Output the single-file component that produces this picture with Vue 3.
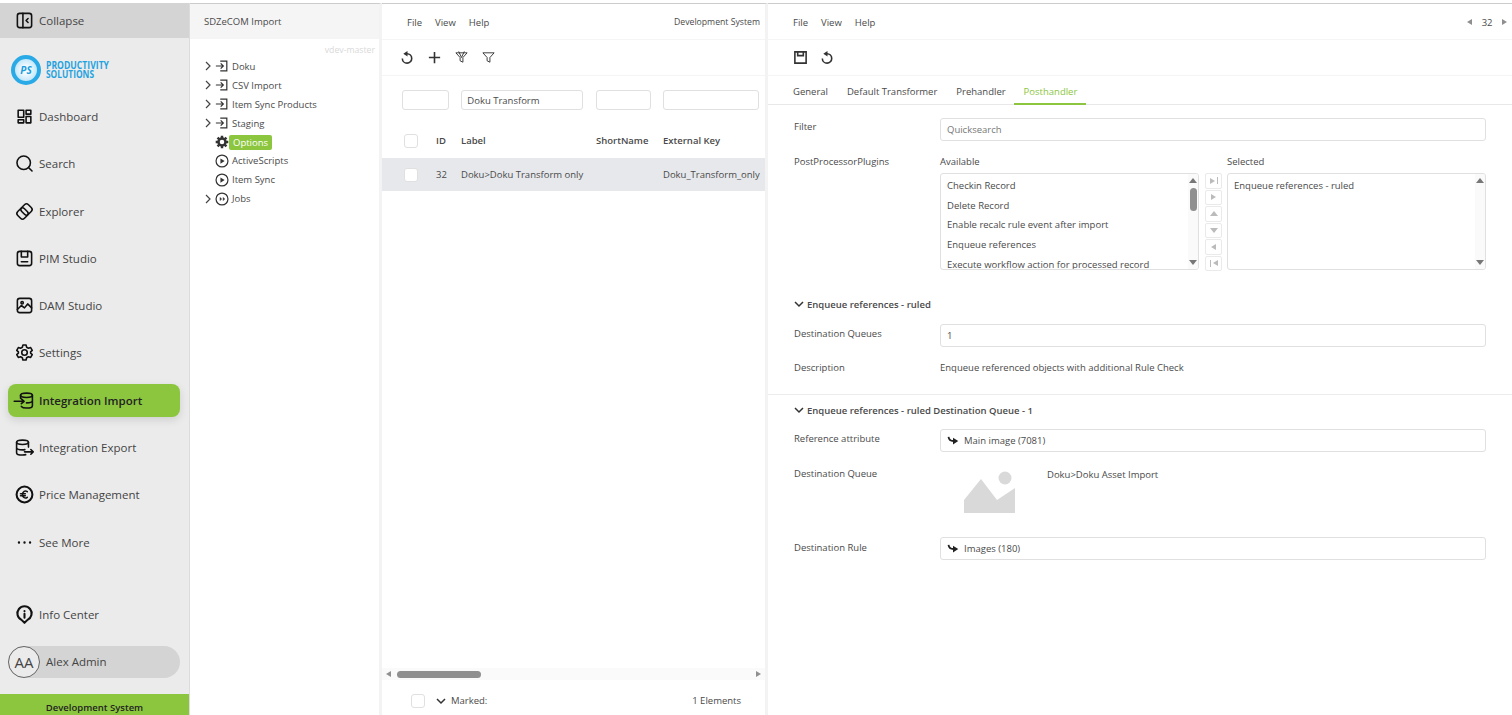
<template>
  <div class="app">
    <aside class="sidebar">
      <div class="collapse">
        <svg class="nav-icon" viewBox="0 0 24 24"><rect x="3" y="3" width="18" height="18" rx="3" /><path d="M10 3v18M16.500 9.500 14 12l2.500 2.500" /></svg>
        <span>Collapse</span>
      </div>
      <div class="logo">
        <div class="logo-mark"><span>PS</span></div>
        <svg class="logo-text" viewBox="0 0 64 18">
          <text x="0" y="8" textLength="63" lengthAdjust="spacingAndGlyphs">PRODUCTIVITY</text>
          <text x="0" y="16.500" textLength="48" lengthAdjust="spacingAndGlyphs">SOLUTIONS</text>
        </svg>
      </div>
      <nav class="nav">
        <div v-for="item in navItems" :key="item.label" class="nav-item" :class="{ active: item.active }">
          <svg class="nav-icon" viewBox="0 0 24 24" v-html="item.icon"></svg>
          <span>{{ item.label }}</span>
        </div>
      </nav>
      <div class="nav-item info">
        <svg class="nav-icon heavy" viewBox="0 0 24 24"><path d="M12 22.500 8.200 18.800A9 9 0 1 1 15.800 18.800Z" /><path d="M12 11v5M12 7.500v.5" /></svg>
        <span>Info Center</span>
      </div>
      <div class="user">
        <div class="avatar">AA</div>
        <span>Alex Admin</span>
      </div>
      <div class="env">Development System</div>
    </aside>

    <section class="tree-panel">
      <div class="tree-head">SDZeCOM Import</div>
      <div class="version">vdev-master</div>
      <div class="tree">
        <div v-for="node in treeNodes" :key="node.label" class="tree-row">
          <svg class="chev" viewBox="0 0 10 10"><path v-if="node.open" d="M3 1l4 4-4 4" /></svg>
          <svg class="tree-icon" :class="{ gear: node.type === 'gear' }" viewBox="0 0 16 16" v-html="treeIcons[node.type]"></svg>
          <span :class="{ picked: node.picked }">{{ node.label }}</span>
        </div>
      </div>
    </section>

    <section class="list-panel">
      <div class="menu">
        <span>File</span><span>View</span><span>Help</span>
        <span class="menu-right">Development System</span>
      </div>
      <div class="toolbar">
        <svg class="tool" viewBox="0 0 16 16"><path d="M7.500 4a5 5 0 1 1-5 5" /><path class="solid" d="M3.500 4 8 1v6Z" /></svg>
        <svg class="tool" viewBox="0 0 16 16"><path d="M8 2v12M2 8h12" /></svg>
        <svg class="tool thin" viewBox="0 0 16 16"><path d="M2 3h12L9.500 8v5l-3-1.500V8Z" /><path d="M5 1.500 8 8l3-6.500" /></svg>
        <svg class="tool thin" viewBox="0 0 16 16"><path d="M2 3h12L9.500 8v5l-3-1.500V8Z" /></svg>
      </div>
      <div class="filters">
        <div class="box"></div>
        <div class="box">Doku Transform</div>
        <div class="box"></div>
        <div class="box"></div>
      </div>
      <div class="grid-row grid-head">
        <i class="check"></i><span>ID</span><span>Label</span><span>ShortName</span><span>External Key</span>
      </div>
      <div class="grid-row grid-selected">
        <i class="check"></i><span>32</span><span>Doku&gt;Doku Transform only</span><span></span><span>Doku_Transform_only</span>
      </div>
      <div class="grid-space"></div>
      <div class="hscroll">
        <i class="tri left"></i>
        <div class="hscroll-track"><div class="hscroll-thumb"></div></div>
        <i class="tri right"></i>
      </div>
      <div class="list-foot">
        <i class="check"></i>
        <svg class="foot-chev" viewBox="0 0 10 10"><path d="M1 3l4 4 4-4" /></svg>
        <span>Marked:</span>
        <span class="foot-count">1 Elements</span>
      </div>
    </section>

    <section class="detail-panel">
      <div class="menu">
        <span>File</span><span>View</span><span>Help</span>
        <span class="pager"><i class="tri left"></i>32<i class="tri right"></i></span>
      </div>
      <div class="toolbar">
        <svg class="tool save" viewBox="0 0 16 16"><path d="M2 2h12v12H2Z" /><path d="M5 2v4h6V2" /></svg>
        <svg class="tool" viewBox="0 0 16 16"><path d="M7.500 4a5 5 0 1 1-5 5" /><path class="solid" d="M3.500 4 8 1v6Z" /></svg>
      </div>
      <div class="tabs">
        <span v-for="tab in tabs" :key="tab" class="tab" :class="{ active: tab === 'Posthandler' }">{{ tab }}</span>
      </div>
      <div class="form">
        <div class="field filter-field">
          <label>Filter</label>
          <div class="box wide muted">Quicksearch</div>
        </div>
        <div class="field plugin-field">
          <label>PostProcessorPlugins</label>
          <div class="shuttle">
            <div class="shuttle-col">
              <div class="shuttle-title">Available</div>
              <div class="listbox">
                <div class="listbox-items">
                  <div v-for="p in available" :key="p">{{ p }}</div>
                </div>
                <div class="vscroll">
                  <i class="tri up"></i><div class="vscroll-thumb"></div><i class="tri down"></i>
                </div>
              </div>
            </div>
            <div class="shuttle-btns">
              <div v-for="(b, i) in shuttleButtons" :key="i" class="shuttle-btn">
                <i v-if="b.barBefore" class="bar"></i><i class="tri" :class="b.dir"></i><i v-if="b.barAfter" class="bar"></i>
              </div>
            </div>
            <div class="shuttle-col">
              <div class="shuttle-title">Selected</div>
              <div class="listbox">
                <div class="listbox-items"><div>Enqueue references - ruled</div></div>
                <div class="vscroll empty"><i class="tri up"></i><i class="tri down"></i></div>
              </div>
            </div>
          </div>
        </div>

        <div class="section-title">
          <svg class="foot-chev" viewBox="0 0 10 10"><path d="M1 3l4 4 4-4" /></svg>
          Enqueue references - ruled
        </div>
        <div class="field queue-field">
          <label>Destination Queues</label>
          <div class="box wide">1</div>
        </div>
        <div class="field desc-field">
          <label>Description</label>
          <div>Enqueue referenced objects with additional Rule Check</div>
        </div>
      </div>

      <div class="form second">
        <div class="section-title">
          <svg class="foot-chev" viewBox="0 0 10 10"><path d="M1 3l4 4 4-4" /></svg>
          Enqueue references - ruled Destination Queue - 1
        </div>
        <div class="field ref-field">
          <label>Reference attribute</label>
          <div class="box wide link-box">
            <svg class="link-icon" viewBox="0 0 16 16"><path d="M2 2.500C2.500 6 4.500 8 8.500 8" /><path class="solid" d="M8 3.500 15 8l-7 4.500Z" /></svg>
            Main image (7081)
          </div>
        </div>
        <div class="field image-field">
          <label>Destination Queue</label>
          <div class="image-value">
            <svg class="placeholder" viewBox="0 0 51 42"><circle cx="41" cy="7" r="6.500" /><path d="M0 42V29L17 8l16 21 18-12v25Z" /></svg>
            <span>Doku&gt;Doku Asset Import</span>
          </div>
        </div>
        <div class="field ref-field rule-field">
          <label>Destination Rule</label>
          <div class="box wide link-box">
            <svg class="link-icon" viewBox="0 0 16 16"><path d="M2 2.500C2.500 6 4.500 8 8.500 8" /><path class="solid" d="M8 3.500 15 8l-7 4.500Z" /></svg>
            Images (180)
          </div>
        </div>
      </div>
    </section>
  </div>
</template>

<script setup>
const navItems = [
  { label: 'Dashboard', icon: '<path d="M4 4h7v9H4ZM14 4h6v5h-6ZM14 12h6v8h-6ZM4 16h7v4H4Z"/>' },
  { label: 'Search', icon: '<circle cx="11" cy="11" r="8.500"/><path d="M17 17l4.500 4.500"/>' },
  { label: 'Explorer', icon: '<rect x="8.500" y="3.500" width="12" height="12" rx="3.500" transform="rotate(45 14.500 9.500)"/><rect x="3.500" y="8.500" width="12" height="12" rx="3.500" transform="rotate(45 9.500 14.500)"/>' },
  { label: 'PIM Studio', icon: '<rect x="3" y="3" width="18" height="18" rx="3"/><path d="M8 3v7h8V3M8 16h8"/>' },
  { label: 'DAM Studio', icon: '<rect x="3" y="3" width="18" height="18" rx="3"/><circle cx="9" cy="8.500" r="1.500"/><path d="M3 17l5-5 4 3 4-5 5 5"/>' },
  { label: 'Settings', icon: '<circle cx="12" cy="12" r="3.500"/><path d="M10 2.500h4l.7 2.800 2.300 1.300 2.800-.8 2 3.500-2.100 2v1.400l2.100 2-2 3.500-2.800-.8-2.300 1.300-.7 2.800h-4l-.7-2.800L7 17.400l-2.800.8-2-3.500 2.100-2v-1.400l-2.100-2 2-3.500 2.800.8 2.300-1.300Z"/>' },
  { label: 'Integration Import', active: true, icon: '<ellipse cx="14.500" cy="5.500" rx="7.500" ry="2.800"/><path d="M7 5.500v3.500M22 5.500v13c0 1.700-3.300 3-7.500 3-3 0-5.500-.8-6.500-2M22 12c0 1.700-3.300 3-7.500 3M-1 13h12M8 10l3.500 3L8 16"/>' },
  { label: 'Integration Export', icon: '<ellipse cx="9.500" cy="5.500" rx="7.500" ry="2.800"/><path d="M2 5.500v13c0 1.700 3.500 3 7.500 3 1.500 0 3-.2 4-.5M17 5.500v6M2 12c0 1.700 3.500 3 7.500 3 1 0 2-.1 3-.3M12 17.500h11M20 14.500l3 3-3 3"/>' },
  { label: 'Price Management', icon: '<circle cx="12" cy="12" r="10" stroke-width="2.600"/><path d="M15.500 8.500C13 6.500 9.500 8 9.500 12s3.500 5.500 6 3.500M7 11h6M7 13.500h6"/>' },
  { label: 'See More', icon: '<path class="dots" d="M5 12h.01M12 12h.01M19 12h.01"/>' }
]

const treeIcons = {
  import: '<path d="M6 2.500h7.500v11H6M1 8h8M6.500 5L9.500 8l-3 3"/>',
  gear: '<circle cx="8" cy="8" r="4"/><path d="M8 .8v3M8 12.200v3M.8 8h3M12.200 8h3M2.900 2.900 5 5M11 11l2.100 2.100M13.100 2.900 11 5M5 11l-2.100 2.100"/>',
  play: '<circle cx="8" cy="8" r="6.800"/><path class="solid" d="M6.200 5 11 8l-4.800 3Z"/>',
  jobs: '<circle cx="8" cy="8" r="6.800"/><path d="M5.500 6.500 7 8l-1.500 1.500M9 6.500 10.500 8 9 9.500"/>'
}

const treeNodes = [
  { label: 'Doku', type: 'import', open: true },
  { label: 'CSV Import', type: 'import', open: true },
  { label: 'Item Sync Products', type: 'import', open: true },
  { label: 'Staging', type: 'import', open: true },
  { label: 'Options', type: 'gear', picked: true },
  { label: 'ActiveScripts', type: 'play' },
  { label: 'Item Sync', type: 'play' },
  { label: 'Jobs', type: 'jobs', open: true }
]

const tabs = ['General', 'Default Transformer', 'Prehandler', 'Posthandler']

const available = [
  'Checkin Record',
  'Delete Record',
  'Enable recalc rule event after import',
  'Enqueue references',
  'Execute workflow action for processed record'
]

const shuttleButtons = [
  { dir: 'right', barAfter: true },
  { dir: 'right' },
  { dir: 'up' },
  { dir: 'down' },
  { dir: 'left' },
  { dir: 'left', barBefore: true }
]
</script>

<style>
html,
body {
  margin: 0;
  background: #fff;
  overflow: hidden;
}
</style>

<style scoped>
.app {
  display: flex;
  width: 1512px;
  height: 715px;
  box-sizing: border-box;
  padding-top: 3px;
  font-family: "Open Sans", "Noto Sans", sans-serif;
  font-size: 9.500px;
  color: #4a4a4a;
  overflow: hidden;
}

.sidebar {
  width: 189px;
  flex: none;
  display: flex;
  flex-direction: column;
  background: #ebebeb;
  border-right: 1px solid #dcdcdc;
  font-size: 11.500px;
  color: #444;
}

.collapse {
  height: 35px;
  flex: none;
  display: flex;
  align-items: center;
  gap: 5px;
  padding-left: 15px;
  background: #d4d4d4;
}

.nav-icon {
  width: 19px;
  height: 19px;
  flex: none;
  fill: none;
  stroke: #111;
  stroke-width: 2;
  stroke-linecap: round;
  stroke-linejoin: round;
  overflow: visible;
}

.nav-icon.heavy {
  stroke-width: 2.600;
}

.nav-icon :deep(.dots) {
  stroke-width: 3;
}

.logo {
  height: 62px;
  flex: none;
  display: flex;
  align-items: center;
  gap: 5px;
  padding: 2px 0 0 11px;
  box-sizing: border-box;
}

.logo-mark {
  width: 30px;
  height: 30px;
  flex: none;
  box-sizing: border-box;
  border: 4px solid #29a9e6;
  border-radius: 50%;
  background: radial-gradient(circle, #f4fbff 25%, #a9dcf6 95%);
  display: flex;
  align-items: center;
  justify-content: center;
  color: #1c9ddd;
  font-size: 10px;
  font-weight: 700;
  font-style: italic;
}

.logo-text {
  width: 64px;
  height: 18px;
  flex: none;
  fill: #1fa3e0;
  font-size: 10.500px;
  font-weight: 700;
  overflow: visible;
}

.nav {
  display: flex;
  flex-direction: column;
}

.nav-item {
  height: 33px;
  margin: 0 9px 14.300px 8px;
  padding-left: 7px;
  flex: none;
  display: flex;
  align-items: center;
  gap: 5px;
  border-radius: 8px;
}

.nav-item.active {
  background: #8cc63f;
  color: #222;
  font-weight: 600;
  box-shadow: 0 3px 8px rgba(0, 0, 0, 0.12);
}

.info {
  margin-top: 25.500px;
}

.user {
  height: 32px;
  flex: none;
  margin: 0 9px 0 8px;
  display: flex;
  align-items: center;
  gap: 6px;
  background: #d4d4d4;
  border-radius: 16px;
}

.avatar {
  width: 30px;
  height: 30px;
  flex: none;
  border: 1px solid #666;
  border-radius: 50%;
  background: #ebebeb;
  display: flex;
  align-items: center;
  justify-content: center;
  font-size: 15px;
}

.env {
  margin-top: auto;
  height: 21px;
  flex: none;
  background: #8cc63f;
  color: #222;
  font-size: 9.500px;
  font-weight: 600;
  display: flex;
  align-items: flex-end;
  justify-content: center;
  padding-bottom: 1px;
  box-sizing: border-box;
}

.tree-panel {
  width: 189px;
  flex: none;
  border-right: 3px solid #f3f3f3;
  border-top: 1px solid #ccc;
}

.tree-head {
  height: 35px;
  display: flex;
  align-items: center;
  padding-left: 14px;
  background: #f5f5f5;
}

.version {
  text-align: right;
  padding-right: 4px;
  margin-top: 5px;
  height: 13px;
  color: #d9d9d9;
  font-size: 8.700px;
}

.tree {
  padding-left: 13px;
}

.tree-row {
  height: 18.900px;
  display: flex;
  align-items: center;
}

.chev {
  width: 10px;
  height: 10px;
  flex: none;
  fill: none;
  stroke: #444;
  stroke-width: 1.200;
}

.tree-icon {
  width: 14px;
  height: 14px;
  flex: none;
  margin: 0 3px 0 2px;
  fill: none;
  stroke: #333;
  stroke-width: 1.400;
}

.tree-icon :deep(.solid) {
  fill: #333;
  stroke: none;
}

.tree-icon.gear {
  stroke-width: 2.800;
}

.picked {
  background: #8cc63f;
  color: #fff;
  border-radius: 2px;
  padding: 1px 4px;
  margin-left: -3px;
}

.list-panel {
  width: 383px;
  flex: none;
  display: flex;
  flex-direction: column;
  border-right: 3px solid #f3f3f3;
  border-top: 1px solid #ccc;
}

.menu {
  height: 36px;
  flex: none;
  display: flex;
  align-items: center;
  gap: 13px;
  padding: 1px 5px 0 25px;
  box-sizing: border-box;
  border-bottom: 1px solid #f5f5f5;
}

.menu-right {
  margin-left: auto;
  font-size: 8.700px;
}

.toolbar {
  height: 36px;
  flex: none;
  display: flex;
  align-items: center;
  gap: 12px;
  padding-left: 18px;
  box-sizing: border-box;
  border-bottom: 1px solid #f5f5f5;
}

.tool {
  width: 15px;
  height: 15px;
  fill: none;
  stroke: #333;
  stroke-width: 1.700;
}

.tool .solid {
  fill: #333;
  stroke: none;
}

.tool.thin {
  stroke-width: 1;
}

.filters {
  display: grid;
  grid-template-columns: 47px 122px 55px 96px;
  gap: 13px 12.300px;
  padding: 14px 0 0 20px;
  height: 49px;
  box-sizing: border-box;
}

.box {
  height: 20px;
  box-sizing: border-box;
  border: 1px solid #e0e0e0;
  border-radius: 3px;
  padding: 0 5px;
  display: flex;
  align-items: center;
}

.grid-row {
  display: grid;
  grid-template-columns: 32px 25px 135px 67px 1fr;
  align-items: center;
  padding-left: 22px;
  white-space: nowrap;
  flex: none;
}

.grid-head {
  height: 33px;
  font-weight: 600;
  padding-bottom: 2px;
  box-sizing: border-box;
}

.grid-selected {
  height: 33px;
  background: #e6e8ec;
}

.check {
  display: block;
  width: 14px;
  height: 14px;
  box-sizing: border-box;
  border: 1px solid #e0e0e0;
  border-radius: 3px;
  background: #fff;
}

.grid-space {
  flex: 1;
}

.hscroll {
  height: 12px;
  flex: none;
  display: flex;
  align-items: center;
  gap: 6px;
  padding: 0 4px;
  background: #fafafa;
}

.hscroll-track {
  flex: 1;
}

.hscroll-thumb {
  width: 84px;
  height: 7px;
  border-radius: 4px;
  background: #8f8f8f;
}

.tri {
  display: block;
  width: 0;
  height: 0;
  flex: none;
  border-style: solid;
  border-color: transparent;
}

.tri.left {
  border-width: 3.500px 5px 3.500px 0;
  border-right-color: #8f8f8f;
}

.tri.right {
  border-width: 3.500px 0 3.500px 5px;
  border-left-color: #8f8f8f;
}

.tri.up {
  border-width: 0 4px 5px;
  border-bottom-color: #777;
}

.tri.down {
  border-width: 5px 4px 0;
  border-top-color: #777;
}

.list-foot {
  height: 35px;
  flex: none;
  display: flex;
  align-items: center;
  padding: 6px 24px 0 29px;
  box-sizing: border-box;
}

.foot-chev {
  width: 10px;
  height: 10px;
  flex: none;
  fill: none;
  stroke: #333;
  stroke-width: 1.500;
}

.list-foot .foot-chev {
  margin: 0 5px 0 11px;
}

.foot-count {
  margin-left: auto;
}

.detail-panel {
  flex: 1;
  display: flex;
  flex-direction: column;
  border-top: 1px solid #ccc;
}

.detail-panel .toolbar {
  gap: 12px;
  padding-left: 25px;
}

.pager {
  margin-left: auto;
  display: flex;
  align-items: center;
  gap: 9.500px;
}

.tabs {
  height: 28px;
  flex: none;
  display: flex;
  padding-left: 20px;
  border-bottom: 1px solid #e8e8e8;
}

.tab {
  padding: 3px 5px 0;
  margin-right: 9px;
  display: flex;
  align-items: center;
  border-bottom: 1px solid transparent;
}

.tab.active {
  padding: 3px 9px 0 10px;
  margin-left: -6px;
  color: #8cc63f;
  border-bottom: 2px solid #8cc63f;
  margin-bottom: -1px;
}

.form {
  padding: 0 26px;
  flex: none;
}

.second {
  border-top: 1px solid #ececec;
}

.field {
  display: grid;
  grid-template-columns: 146px 1fr;
}

.filter-field label {
  padding-top: 2px;
}

.queue-field label,
.ref-field label {
  padding-top: 3px;
}

.rule-field label {
  padding-top: 4px;
}

.filter-field {
  margin-top: 13px;
}

.box.wide {
  height: 23px;
  padding: 0 6px;
}

.muted {
  color: #777;
}

.plugin-field {
  margin-top: 12px;
  height: 139px;
}

.plugin-field label {
  padding-top: 2px;
}

.shuttle {
  display: grid;
  grid-template-columns: 259px 28px 259px;
}

.shuttle-title {
  height: 18px;
  padding-top: 2px;
}

.listbox {
  height: 97px;
  box-sizing: border-box;
  border: 1px solid #e0e0e0;
  border-radius: 3px;
  display: flex;
  overflow: hidden;
}

.listbox-items {
  flex: 1;
  padding: 2px 6px;
  line-height: 19.700px;
  white-space: nowrap;
}

.vscroll {
  width: 10px;
  flex: none;
  display: flex;
  flex-direction: column;
  align-items: center;
  padding: 4px 0;
  box-sizing: border-box;
  background: #fafafa;
}

.vscroll.empty {
  justify-content: space-between;
}

.vscroll-thumb {
  width: 7px;
  height: 23px;
  margin: 5px 0 auto;
  border-radius: 4px;
  background: #8f8f8f;
}

.shuttle-btns {
  display: flex;
  flex-direction: column;
  gap: 1px;
  margin: 20px 5px 0 6px;
  width: 17px;
}

.shuttle-btn {
  height: 15.500px;
  border: 1px solid #eaeaea;
  border-radius: 2px;
  box-sizing: border-box;
  display: flex;
  align-items: center;
  justify-content: center;
  gap: 2px;
}

.shuttle-btn .tri.left {
  border-right-color: #bbb;
}

.shuttle-btn .tri.right {
  border-left-color: #bbb;
}

.shuttle-btn .tri.up {
  border-bottom-color: #bbb;
}

.shuttle-btn .tri.down {
  border-top-color: #bbb;
}

.bar {
  display: block;
  width: 1px;
  height: 7px;
  background: #bbb;
}

.section-title {
  display: flex;
  align-items: center;
  gap: 3px;
  font-weight: 600;
  height: 16px;
}

.form > .section-title {
  margin-top: 4px;
}

.queue-field {
  margin-top: 12px;
}

.desc-field {
  margin-top: 14px;
  height: 33px;
}

.second .section-title {
  margin-top: 7px;
}

.ref-field {
  margin-top: 11px;
}

.link-box {
  gap: 5px;
}

.link-icon {
  width: 12px;
  height: 12px;
  fill: none;
  stroke: #222;
  stroke-width: 2.400;
}

.link-icon .solid {
  fill: #222;
  stroke: none;
}

.image-field {
  margin-top: 15px;
  height: 59px;
}

.image-value {
  display: flex;
  align-items: flex-start;
  gap: 32px;
  padding-left: 24px;
}

.image-value span {
  margin-top: 1px;
}

.placeholder {
  width: 51px;
  height: 42px;
  fill: #d9d9d9;
  margin-top: 4px;
}
</style>
